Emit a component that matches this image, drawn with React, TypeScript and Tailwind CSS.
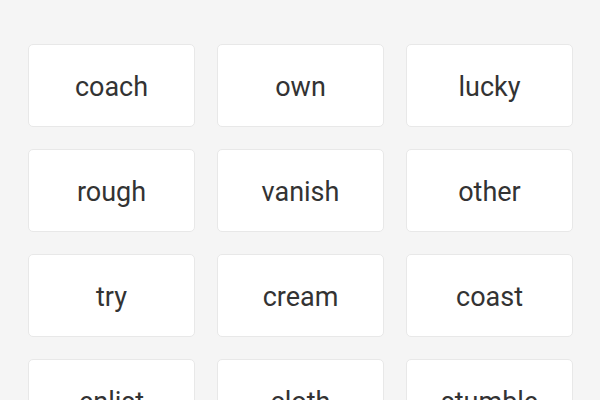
const words = ['coach', 'own', 'lucky', 'rough', 'vanish', 'other', 'try', 'cream', 'coast', 'enlist', 'cloth', 'stumble'];

export default function App() {
  return (
    <div className="w-[600px] h-[400px] overflow-hidden bg-[#f5f5f5]" style={{ fontFamily: 'Roboto, "Noto Sans", sans-serif' }}>
      <div className="grid grid-cols-3 gap-x-[22px] gap-y-[22px] pl-[28px] pr-[27px] pt-[44px]">
        {words.map((w) => (
          <div
            key={w}
            className="h-[83px] flex items-center justify-center pt-[4px] bg-white border border-[#e8e8e8] rounded-[5px] text-[27px] text-[#333333]"
          >
            {w}
          </div>
        ))}
      </div>
    </div>
  );
}
